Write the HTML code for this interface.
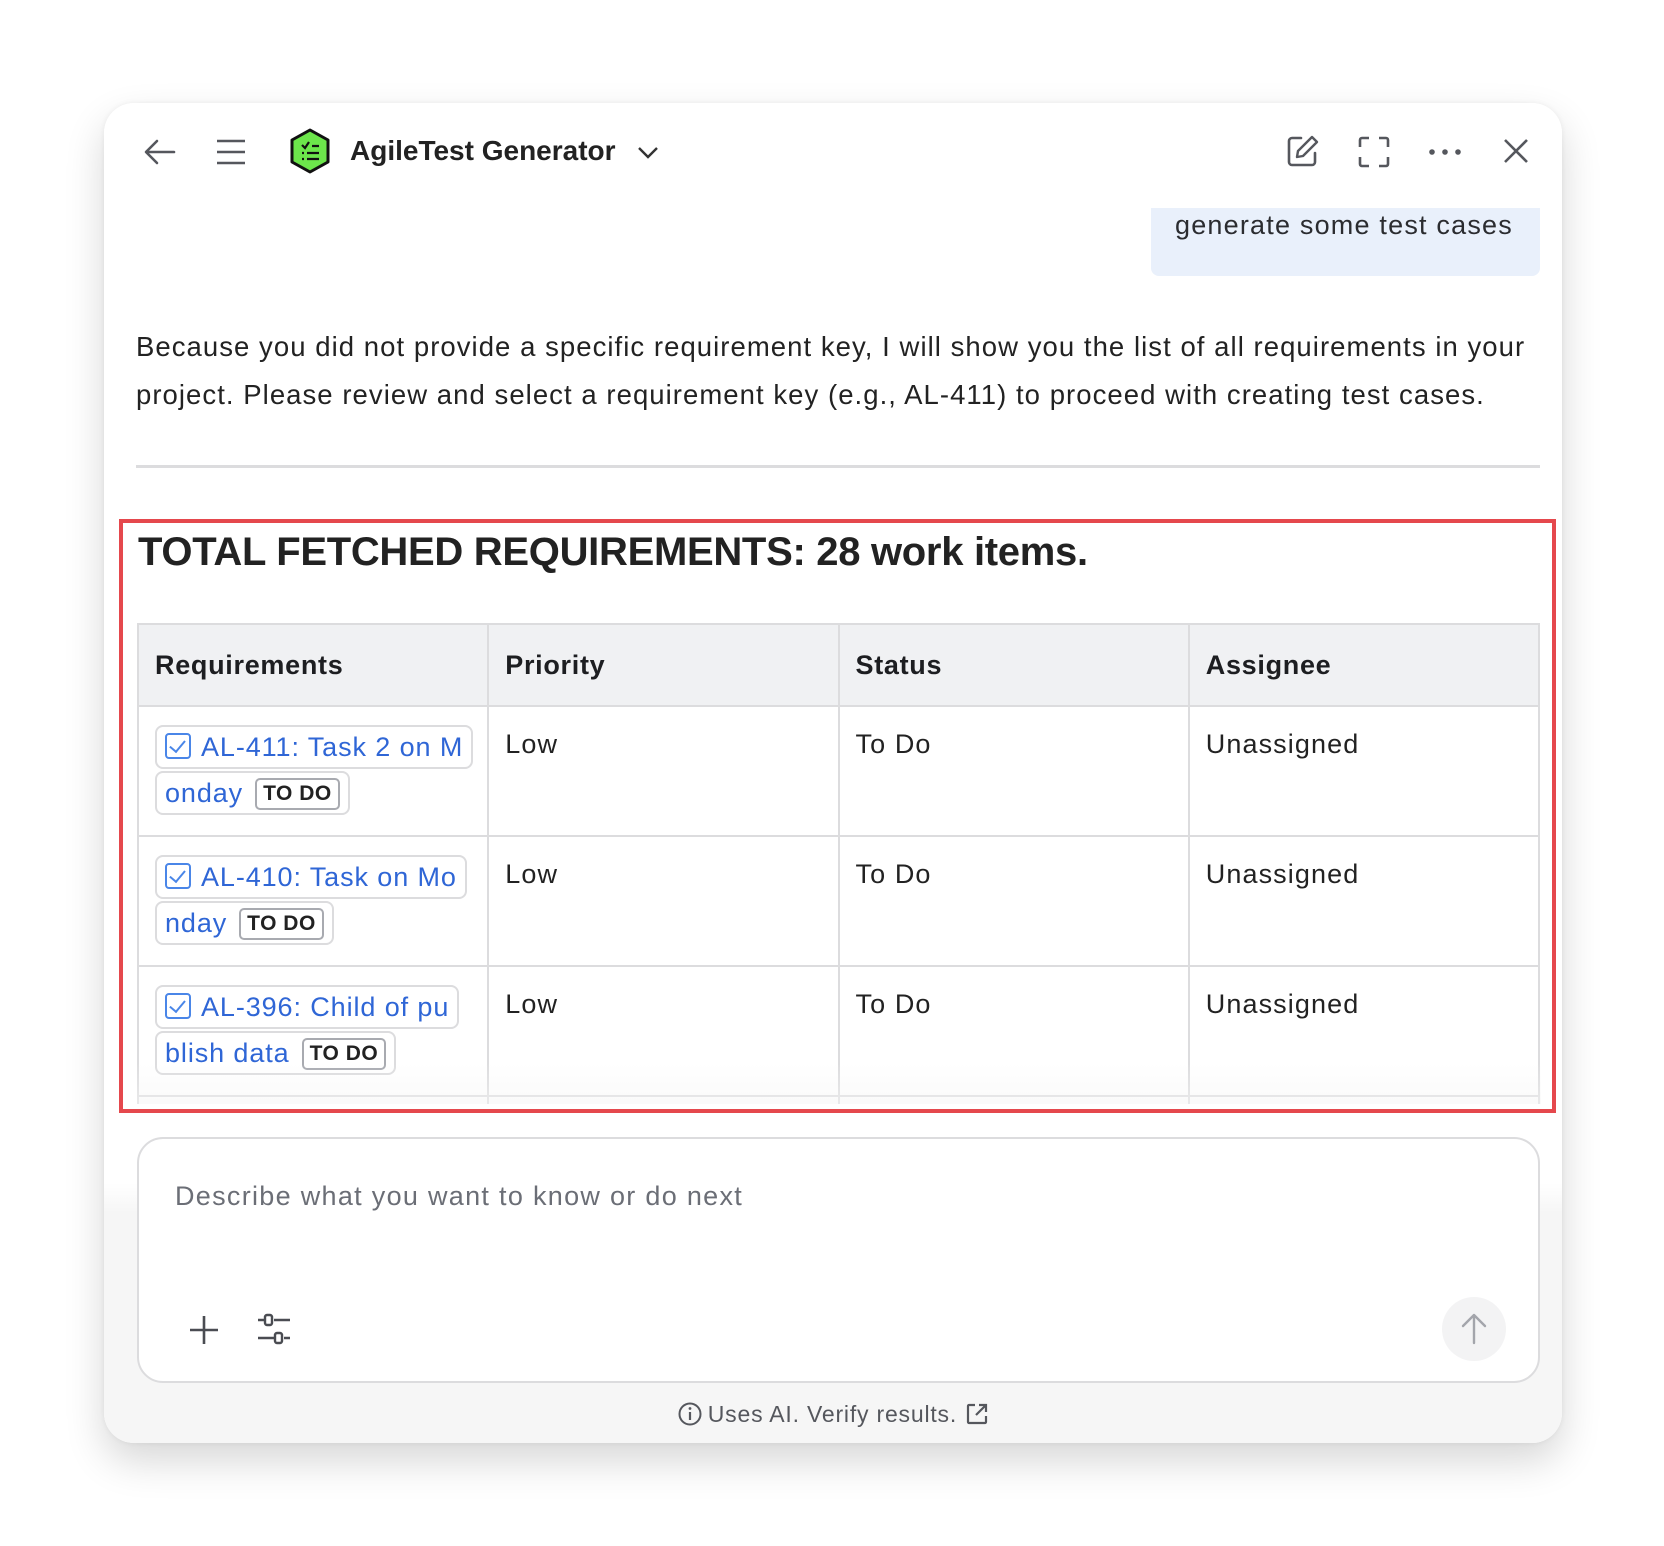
<!DOCTYPE html>
<html><head><meta charset="utf-8"><style>
*{box-sizing:border-box;margin:0;padding:0}
body{width:1664px;height:1546px;background:#fff;font-family:"Liberation Sans",Arial,sans-serif;color:#1d1e21;position:relative;overflow:hidden}
.card{position:absolute;left:104px;top:103px;width:1458px;height:1340px;border-radius:30px;background:linear-gradient(#fff 0,#fff 1080px,#f6f6f6 1110px,#f6f6f6 100%);box-shadow:0 18px 40px rgba(0,0,0,.16),0 0 6px rgba(0,0,0,.06);overflow:hidden}
.a{position:absolute}
svg{position:absolute;overflow:visible}
.title{left:246px;top:32px;font-size:28px;font-weight:bold;color:#222}
.bubble{left:1047px;top:105px;width:389px;height:68px;background:#e9f0fb;border-radius:0 0 8px 8px;font-size:27px;padding:0 0 0 24px;line-height:34px;color:#2b2c30;letter-spacing:1.2px}
.body{left:32px;top:220px;width:1420px;font-size:27.5px;line-height:48px;color:#222;letter-spacing:1.05px}
.div{left:32px;top:362px;width:1404px;height:3px;background:#dcdcde}
.red{left:15px;top:416px;width:1437px;height:594px;border:4px solid #e5484d}
.h{left:34px;top:427px;font-size:40px;font-weight:bold;color:#222;letter-spacing:-0.3px}
.tbl{left:33px;top:520px;width:1404px;height:481px;overflow:hidden}
table{border-collapse:collapse;width:1403px;table-layout:fixed;font-size:27px;letter-spacing:1.1px}
td,th{border:2px solid #dcdcde;text-align:left;vertical-align:top;padding:0 16px}
th{background:#f0f1f3;height:82px;vertical-align:middle;font-weight:bold;letter-spacing:0.7px}
td{height:130px;padding-top:22px;color:#222}
td:first-child{padding-right:0}
.chip{display:inline-block;white-space:nowrap;border:2px solid #dcdcde;border-radius:8px;padding:0 8px;color:#2f66d6;line-height:40px;height:44px;margin-left:0;letter-spacing:0.9px;margin-top:-4px}
.chip2{margin-top:2px}
.cb{display:inline-block;width:26px;height:26px;border:2.5px solid #4a86e8;border-radius:4px;vertical-align:-3px;margin-right:10px;position:relative}
.cb:after{content:"";position:absolute;left:6px;top:2px;width:7px;height:13px;border:solid #4a86e8;border-width:0 2.5px 2.5px 0;transform:rotate(40deg)}
.td{display:inline-block;border:2px solid #a8aab0;border-radius:5px;font-size:21px;font-weight:bold;color:#222;line-height:28px;padding:0 6px;margin-left:12px;vertical-align:2px;letter-spacing:0.5px}
.fade{left:33px;top:960px;width:1404px;height:41px;background:linear-gradient(rgba(255,255,255,0),rgba(245,245,245,.5))}
.inp{left:33px;top:1034px;width:1403px;height:246px;border:2px solid #dcdcde;border-radius:26px;background:#fff}
.ph{left:36px;top:42px;font-size:27px;color:#6b6e76;letter-spacing:1.3px}
.send{left:1303px;top:158px;width:64px;height:64px;border-radius:50%;background:#f3f3f4}
.foot{left:0;width:1458px;top:1298px;text-align:center;font-size:23px;color:#55575d;letter-spacing:0.8px}
</style></head><body>
<div class="card">
 <svg style="left:40px;top:36px" width="32" height="26" viewBox="0 0 32 26"><path d="M30 13H3M13 2L2 13l11 11" fill="none" stroke="#55575d" stroke-width="2.6" stroke-linecap="round" stroke-linejoin="round"/></svg>
 <svg style="left:112px;top:36px" width="30" height="26"><path d="M1 2h28M1 13h28M1 24h28" stroke="#55575d" stroke-width="2.6"/></svg>
 <svg style="left:186px;top:25px" width="40" height="46" viewBox="0 0 40 46"><path d="M20 2L38 12v22L20 44 2 34V12z" fill="#6ce64b" stroke="#111" stroke-width="3" stroke-linejoin="round"/><path d="M12 17l3 3 4-6M22 18h7M12 25h2M17 25h12M12 31h2M17 31h12" stroke="#111" stroke-width="2.2" fill="none"/></svg>
 <div class="a title">AgileTest Generator</div>
 <svg style="left:534px;top:44px" width="20" height="12"><path d="M1 1l9 9 9-9" fill="none" stroke="#333" stroke-width="2.4"/></svg>
 <svg style="left:1183px;top:32px" width="32" height="32" viewBox="0 0 32 32"><path d="M14 3H5a3 3 0 00-3 3v21a3 3 0 003 3h20a3 3 0 003-3v-9" fill="none" stroke="#55575d" stroke-width="2.6" stroke-linecap="round"/><path d="M25 2l5 5-14 14-6 1 1-6z" fill="none" stroke="#55575d" stroke-width="2.4" stroke-linejoin="round"/></svg>
 <svg style="left:1255px;top:34px" width="30" height="30"><path d="M1 10V3a2 2 0 012-2h7M20 1h7a2 2 0 012 2v7M29 20v7a2 2 0 01-2 2h-7M10 29H3a2 2 0 01-2-2v-7" fill="none" stroke="#55575d" stroke-width="2.6"/></svg>
 <svg style="left:1325px;top:46px" width="32" height="6"><circle cx="3" cy="3" r="2.8" fill="#55575d"/><circle cx="16" cy="3" r="2.8" fill="#55575d"/><circle cx="29" cy="3" r="2.8" fill="#55575d"/></svg>
 <svg style="left:1400px;top:36px" width="24" height="24"><path d="M1 1l22 22M23 1L1 23" stroke="#55575d" stroke-width="2.6"/></svg>
 <div class="a bubble">generate some test cases</div>
 <div class="a body">Because you did not provide a specific requirement key, I will show you the list of all requirements in your project. Please review and select a requirement key (e.g., AL-411) to proceed with creating test cases.</div>
 <div class="a div"></div>
 <div class="a h">TOTAL FETCHED REQUIREMENTS: 28 work items.</div>
 <div class="a tbl"><table>
  <tr><th>Requirements</th><th>Priority</th><th>Status</th><th>Assignee</th></tr>
  <tr><td><span class="chip"><span class="cb"></span>AL-411: Task 2 on M</span><br><span class="chip chip2">onday<span class="td">TO DO</span></span></td><td>Low</td><td>To Do</td><td>Unassigned</td></tr>
  <tr><td><span class="chip"><span class="cb"></span>AL-410: Task on Mo</span><br><span class="chip chip2">nday<span class="td">TO DO</span></span></td><td>Low</td><td>To Do</td><td>Unassigned</td></tr>
  <tr><td><span class="chip"><span class="cb"></span>AL-396: Child of pu</span><br><span class="chip chip2">blish data<span class="td">TO DO</span></span></td><td>Low</td><td>To Do</td><td>Unassigned</td></tr>
  <tr><td></td><td></td><td></td><td></td></tr>
 </table></div>
 <div class="a fade"></div>
 <div class="a red"></div>
 <div class="a inp">
  <div class="a ph">Describe what you want to know or do next</div>
  <svg style="left:50px;top:176px" width="30" height="30"><path d="M15 1v28M1 15h28" stroke="#4a4c52" stroke-width="2.6"/></svg>
  <svg style="left:118px;top:174px" width="34" height="32"><path d="M1 7h6M17 7h16M1 25h16M27 25h6" stroke="#4a4c52" stroke-width="2.6"/><rect x="8" y="2" width="7" height="10" rx="2" fill="none" stroke="#4a4c52" stroke-width="2.4"/><rect x="18" y="20" width="7" height="10" rx="2" fill="none" stroke="#4a4c52" stroke-width="2.4"/></svg>
  <div class="a send"></div>
  <svg style="left:1322px;top:174px" width="26" height="32"><path d="M13 30V3M2 13L13 2l11 11" fill="none" stroke="#a3a5ab" stroke-width="2.4" stroke-linecap="round" stroke-linejoin="round"/></svg>
 </div>
 <div class="a foot"><svg style="position:relative;display:inline-block;vertical-align:-4px;margin-right:6px" width="24" height="24"><circle cx="12" cy="12" r="10.5" fill="none" stroke="#55575d" stroke-width="2"/><path d="M12 10v8" stroke="#55575d" stroke-width="2.2"/><circle cx="12" cy="6.5" r="1.4" fill="#55575d"/></svg>Uses AI. Verify results. <svg style="position:relative;display:inline-block;vertical-align:-3px;margin-left:2px" width="22" height="22"><path d="M9 2H3a1 1 0 00-1 1v16a1 1 0 001 1h16a1 1 0 001-1v-6M13 2h7v7M20 2L10 12" fill="none" stroke="#55575d" stroke-width="2.2"/></svg></div>
</div>
</body></html>
